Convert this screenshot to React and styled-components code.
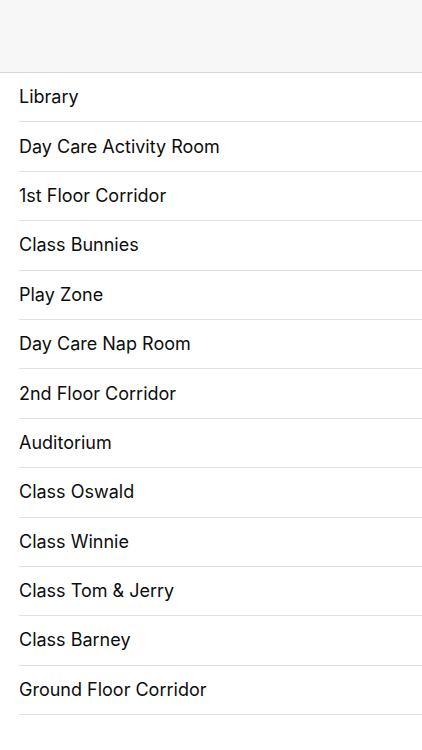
import React from "react";
import styled, { createGlobalStyle } from "styled-components";

const Global = createGlobalStyle`
  html, body { margin: 0; padding: 0; background: #ffffff; }
  body { font-family: Inter, "Liberation Sans", Arial, sans-serif; }
`;

const Page = styled.div`
  width: 422px;
  min-height: 750px;
  background: #ffffff;
  display: flex;
  flex-direction: column;
`;

const NavBar = styled.header`
  height: 72px;
  background: #f7f7f7;
  border-bottom: 1px solid #d6d6d6;
  flex-shrink: 0;
`;

const List = styled.ul`
  list-style: none;
  margin: 0;
  padding: 0;
  padding-left: 19px;
`;

const Row = styled.li`
  height: 49.4px;
  box-sizing: border-box;
  display: flex;
  align-items: center;
  padding-bottom: 1px;
  border-bottom: 1px solid #e0e0e0;
  font-size: 18px;
  color: #0d0d0d;
`;

const rooms = [
  "Library",
  "Day Care Activity Room",
  "1st Floor Corridor",
  "Class Bunnies",
  "Play Zone",
  "Day Care Nap Room",
  "2nd Floor Corridor",
  "Auditorium",
  "Class Oswald",
  "Class Winnie",
  "Class Tom & Jerry",
  "Class Barney",
  "Ground Floor Corridor",
];

export default function App() {
  return (
    <>
      <Global />
      <Page>
        <NavBar />
        <List>
          {rooms.map((r) => (
            <Row key={r}>{r}</Row>
          ))}
        </List>
      </Page>
    </>
  );
}
